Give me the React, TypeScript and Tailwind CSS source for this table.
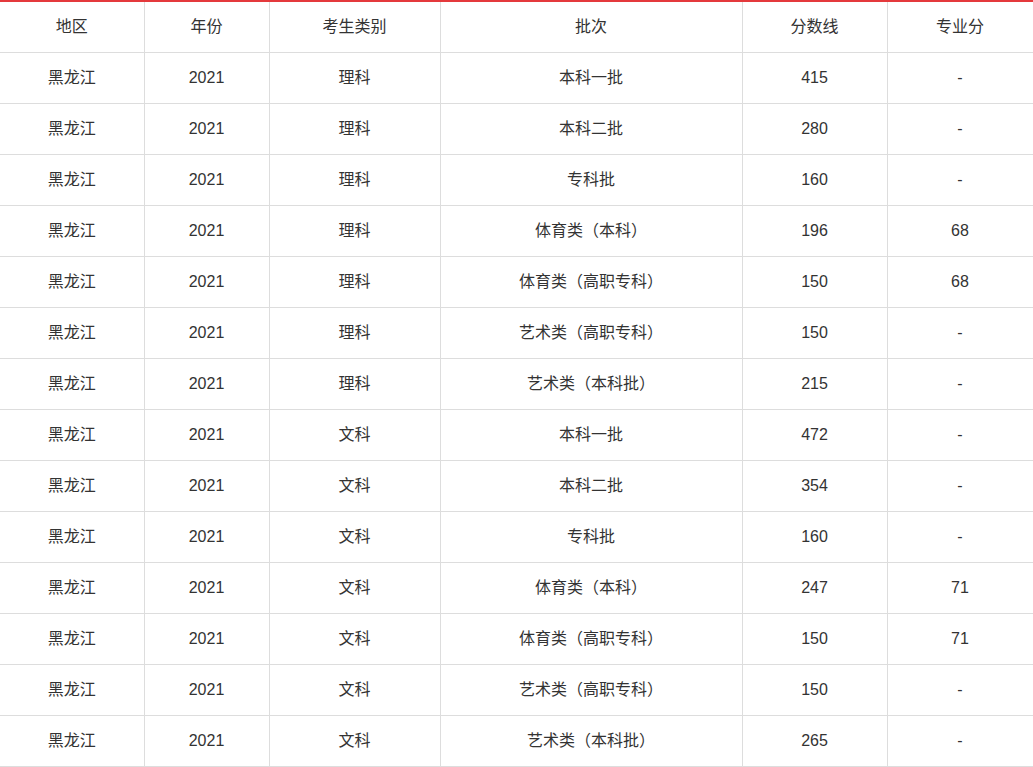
const headers = ['地区', '年份', '考生类别', '批次', '分数线', '专业分'];

const rows: [string, string, string, string][] = [
  ['理科', '本科一批', '415', '-'],
  ['理科', '本科二批', '280', '-'],
  ['理科', '专科批', '160', '-'],
  ['理科', '体育类（本科）', '196', '68'],
  ['理科', '体育类（高职专科）', '150', '68'],
  ['理科', '艺术类（高职专科）', '150', '-'],
  ['理科', '艺术类（本科批）', '215', '-'],
  ['文科', '本科一批', '472', '-'],
  ['文科', '本科二批', '354', '-'],
  ['文科', '专科批', '160', '-'],
  ['文科', '体育类（本科）', '247', '71'],
  ['文科', '体育类（高职专科）', '150', '71'],
  ['文科', '艺术类（高职专科）', '150', '-'],
  ['文科', '艺术类（本科批）', '265', '-'],
];

const widths = ['w-[144px]', 'w-[125px]', 'w-[171px]', 'w-[302px]', 'w-[145px]', 'w-[146px]'];

export default function App() {
  return (
    <div className="w-[1033px] bg-white font-['Liberation_Sans','Noto_Sans_CJK_SC',sans-serif] text-[16px] text-[#333]">
      <table className="w-[1033px] table-fixed border-collapse border-t-2 border-t-[#e4393c]">
        <colgroup>
          {widths.map((w, i) => (
            <col key={i} className={w} />
          ))}
        </colgroup>
        <thead>
          <tr className="h-[51px]">
            {headers.map((h, i) => (
              <th
                key={h}
                className={
                  'border-b border-[#ddd] p-0 text-center font-normal ' +
                  (i > 0 ? 'border-l ' : '') +
                  (i === headers.length - 1 ? 'border-r' : '')
                }
              >
                {h}
              </th>
            ))}
          </tr>
        </thead>
        <tbody>
          {rows.map((r, idx) => {
            const cells = ['黑龙江', '2021', ...r];
            return (
              <tr key={idx} className="h-[51px]">
                {cells.map((c, i) => (
                  <td
                    key={i}
                    className={
                      'border-b border-[#ddd] p-0 text-center ' +
                      (i > 0 ? 'border-l ' : '') +
                      (i === cells.length - 1 ? 'border-r' : '')
                    }
                  >
                    {c}
                  </td>
                ))}
              </tr>
            );
          })}
        </tbody>
      </table>
    </div>
  );
}
